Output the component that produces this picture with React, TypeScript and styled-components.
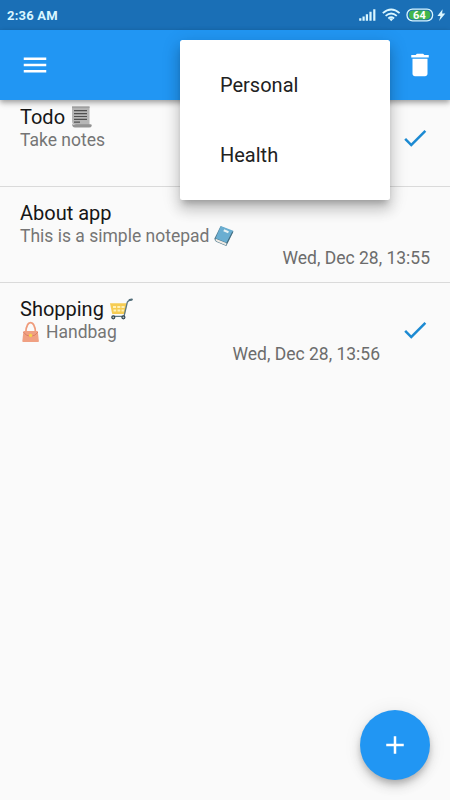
import React from "react";
import styled, { createGlobalStyle } from "styled-components";

const GlobalStyle = createGlobalStyle`
  * { box-sizing: border-box; }
  body { margin: 0; background: #fafafa; }
`;

const Screen = styled.main`
  position: relative;
  display: flex;
  flex-direction: column;
  width: 450px;
  height: 800px;
  overflow: hidden;
  background: #fafafa;
  font-family: Roboto, "Liberation Sans", sans-serif;
`;

const StatusBar = styled.header`
  display: flex;
  flex: none;
  align-items: center;
  justify-content: space-between;
  height: 30px;
  padding: 0 4px 0 7px;
  background: #1a6fb6;
  color: #d9f6ff;
  z-index: 1;
`;

const Clock = styled.span`
  padding-top: 1px;
  font-size: 13px;
  line-height: 30px;
  font-weight: 700;
  letter-spacing: 0.2px;
`;

const StatusIcons = styled.svg`
  display: block;
  width: 88px;
  height: 30px;
`;

const AppBar = styled.nav`
  display: flex;
  flex: none;
  align-items: center;
  justify-content: space-between;
  height: 70px;
  padding: 0 15px 0 20px;
  background: #2196f3;
  box-shadow: 0 2px 5px rgba(0, 0, 0, 0.28), 0 4px 6px rgba(0, 0, 0, 0.12);
  z-index: 1;
`;

const IconButton = styled.button<{ $color?: string }>`
  display: flex;
  flex: none;
  width: 30px;
  height: 30px;
  padding: 0;
  border: 0;
  background: none;
  color: ${(p) => p.$color ?? "#fff"};
`;

const Icon = styled.svg`
  display: block;
  width: 30px;
  height: 30px;
  fill: currentColor;
`;

const NoteList = styled.section`
  display: flex;
  flex-direction: column;
  margin-top: -10px;
`;

const NoteRow = styled.article<{ $divided: boolean }>`
  display: flex;
  align-items: center;
  height: ${(p) => (p.$divided ? 97 : 96)}px;
  margin-bottom: ${(p) => (p.$divided ? -1 : 0)}px;
  padding: 0 20px;
  gap: 20px;
  border-bottom: ${(p) => (p.$divided ? "1px solid #dadada" : "0")};
`;

const NoteBody = styled.div`
  display: flex;
  flex: 1;
  flex-direction: column;
  height: 96px;
  padding-top: 15px;
`;

const Line = styled.div`
  display: flex;
  align-items: center;
  white-space: pre;
`;

const Title = styled(Line)`
  height: 24px;
  gap: 5px;
  color: #161616;
  font-size: 20px;
`;

const Subtitle = styled(Line)`
  height: 21px;
  gap: 5px;
  color: #757575;
  font-size: 17.5px;
  line-height: 20px;
`;

const DateLine = styled(Line)`
  height: 24px;
  justify-content: flex-end;
  color: #6c6c6c;
  font-size: 17.5px;
`;

const Emoji = styled.svg<{ $w: number }>`
  display: block;
  flex: none;
  width: ${(p) => p.$w}px;
  height: 24px;
  overflow: visible;
`;

const Menu = styled.ul`
  position: absolute;
  top: 40px;
  left: 180px;
  z-index: 2;
  width: 210px;
  height: 160px;
  margin: 0;
  padding: 10px 0;
  list-style: none;
  background: #fff;
  border-radius: 2.5px;
  box-shadow: 0 6px 6px -3px rgba(0, 0, 0, 0.2), 0 10px 13px 1px rgba(0, 0, 0, 0.14),
    0 4px 18px 2px rgba(0, 0, 0, 0.12);
`;

const MenuItem = styled.li`
  display: flex;
  align-items: center;
  height: 70px;
  padding-left: 40px;
  color: #212121;
  font-size: 20px;
`;

const Fab = styled.button`
  position: absolute;
  right: 20px;
  bottom: 20px;
  display: flex;
  align-items: center;
  justify-content: center;
  width: 70px;
  height: 70px;
  padding: 0;
  border: 0;
  border-radius: 50%;
  background: #2196f3;
  color: #fff;
  box-shadow: 0 4px 6px -1px rgba(0, 0, 0, 0.2), 0 7px 12px rgba(0, 0, 0, 0.12),
    0 1px 20px rgba(0, 0, 0, 0.07);
`;

const paths = {
  menu: "M3 18h18v-2H3v2zm0-5h18v-2H3v2zm0-7v2h18V6H3z",
  trash: "M6 19c0 1.1.9 2 2 2h8c1.1 0 2-.9 2-2V7H6v12zM19 4h-3.5l-1-1h-5l-1 1H5v2h14V4z",
  check: "M9 16.17L4.83 12l-1.42 1.41L9 19 21 7l-1.41-1.41z",
  plus: "M19 13h-6v6h-2v-6H5v-2h6V5h2v6h6v2z",
};

const Glyph = ({ name }: { name: keyof typeof paths }) => (
  <Icon viewBox="0 0 24 24" aria-hidden>
    <path d={paths[name]} />
  </Icon>
);

const Scroll = () => (
  <Emoji $w={23} viewBox="0 0 23 24" aria-label="scroll">
    <path d="M2 1.5h17.5V20H6Q2 20 2 16z" fill="#b6b6b6" />
    <path d="M2 1.5h17.5v1.6H2z" fill="#a3a3a3" />
    <path d="M4 5.7h13M4 8.6h13M4 11.5h13M4 14.4h13M4 17.2h6" stroke="#505050" strokeWidth="1.2" />
    <path d="M6 19.3h14.5q1.8 0 1.2 1.6-.5 1.6-2.7 1.6H5q-3 0-3-4 .6 2.2 4 .8z" fill="#939393" />
  </Emoji>
);

const Book = () => (
  <Emoji $w={20} viewBox="0 0 20 24" aria-label="blue book">
    <path d="M6.5 2.2L0.6 14.3q-.5 2.5 1.5 3.5l10.2 4.1 7.1-14.2z" fill="#4d788d" />
    <path d="M1.7 14.7l11.2 4.5-1 2.1-9-3.7q-2-1-1.2-2.9z" fill="#eeeae4" />
    <path d="M6.8 2L1.7 14.3l11.1 4.5L19.3 6.8z" fill="#6aaed1" />
    <path d="M18.8 7.5l-6.2 12" stroke="#406777" strokeWidth=".9" />
    <path d="M10.2 5.3l4.7 2-.9 1.9-4.7-2z" fill="#e9f2f2" />
  </Emoji>
);

const Cart = () => (
  <Emoji $w={24} viewBox="0 0 24 24" aria-label="shopping cart">
    <path d="M1 6.3h17.2L16 17H3.2z" fill="#f6cc53" />
    <path d="M4 9h3v2H4zm4.3 0h3v2h-3zm4.2 0h3v2h-3zM4.5 12.5h2.7v2H4.5zm4 0h2.8v2H8.5zm4 0h2.4v2h-2.4z" fill="#fff1b7" />
    <path d="M3.3 19.3H15l3.3-14Q19 3.4 23 2.6" fill="none" stroke="#5c7884" strokeWidth="1.3" />
    <path d="M20.5 3l2.4-.5" stroke="#526e7a" strokeWidth="2" strokeLinecap="round" />
    <g fill="#b1c1c8" stroke="#34454d" strokeWidth="1.2">
      <circle cx="4.3" cy="20.3" r="1.5" />
      <circle cx="14.4" cy="20.3" r="1.5" />
    </g>
  </Emoji>
);

const Handbag = () => (
  <Emoji $w={21} viewBox="0 0 21 24" aria-label="handbag">
    <path d="M5.8 12.5C6.3-.8 14.9-.8 15.5 12.5" fill="none" stroke="#ef9b7b" strokeWidth="1.7" />
    <path d="M3.5 11h14.2l1.2 10.1q.1.9-.8.9H3.2q-1 0-.9-.9z" fill="#f0a082" />
    <path d="M3.3 12Q6 16.2 10.6 16.3 15.3 16.2 18 12" fill="none" stroke="#dc8066" strokeWidth="1" />
    <circle cx="10.6" cy="15.4" r="1.7" fill="#f8d44b" />
  </Emoji>
);

interface Note {
  title: React.ReactNode;
  text: React.ReactNode;
  date?: string;
  done: boolean;
}

const notes: Note[] = [
  { title: <>Todo<Scroll /></>, text: "Take notes", done: true },
  { title: "About app", text: <>This is a simple notepad<Book /></>, date: "Wed, Dec 28, 13:55", done: false },
  { title: <>Shopping<Cart /></>, text: <><Handbag />Handbag</>, date: "Wed, Dec 28, 13:56", done: true },
];

export default function App() {
  return (
    <Screen>
      <GlobalStyle />
      <StatusBar>
        <Clock>2:36 AM</Clock>
        <StatusIcons viewBox="358 0 88 30" aria-label="Signal, Wi-Fi, battery 64 percent, charging">
          <path d="M360.3 18.2v2.5M363.6 16.5v4.2M366.9 14.3v6.4M370.5 11.8v8.9M374.3 9.2v11.5" stroke="#d9f6ff" strokeWidth="2.2" />
          <g fill="none" stroke="#d9f6ff" strokeWidth="1.8">
            <path d="M382.8 13.1Q391.2 5.8 399.6 13.1" />
            <path d="M385.6 15.9Q391.2 11.2 396.8 15.9" />
            <path d="M388.3 18.5Q391.2 16.1 394.1 18.5" />
          </g>
          <path d="M389.2 19.1q2-1.5 4 0l-2 2.2z" fill="#d9f6ff" />
          <rect x="407" y="9.2" width="25.6" height="11.6" rx="5.5" fill="none" stroke="#d9f6ff" strokeWidth="1.3" />
          <path d="M413 10.6h13q4.4 0 4.4 4.4t-4.4 4.4h-13q-4 0-4-4.4t4-4.4z" fill="#43b64a" />
          <text x="419.4" y="19" textAnchor="middle" fill="#fff" fontFamily="Roboto, sans-serif" fontSize="11" fontWeight="700">64</text>
          <path d="M442.6 9.2l-5.2 6.7h3.1l-1.4 5 6.2-7.3h-3.2z" fill="#d9f6ff" />
        </StatusIcons>
      </StatusBar>
      <AppBar>
        <IconButton aria-label="Open navigation"><Glyph name="menu" /></IconButton>
        <IconButton aria-label="Delete"><Glyph name="trash" /></IconButton>
      </AppBar>
      <NoteList>
        {notes.map((note, i) => (
          <NoteRow key={i} $divided={i < notes.length - 1}>
            <NoteBody>
              <Title>{note.title}</Title>
              <Subtitle>{note.text}</Subtitle>
              {note.date && <DateLine>{note.date}</DateLine>}
            </NoteBody>
            {note.done && (
              <IconButton $color="#1c8ad2" aria-label="Done"><Glyph name="check" /></IconButton>
            )}
          </NoteRow>
        ))}
      </NoteList>
      <Menu>
        <MenuItem>Personal</MenuItem>
        <MenuItem>Health</MenuItem>
      </Menu>
      <Fab aria-label="Add note"><Glyph name="plus" /></Fab>
    </Screen>
  );
}
